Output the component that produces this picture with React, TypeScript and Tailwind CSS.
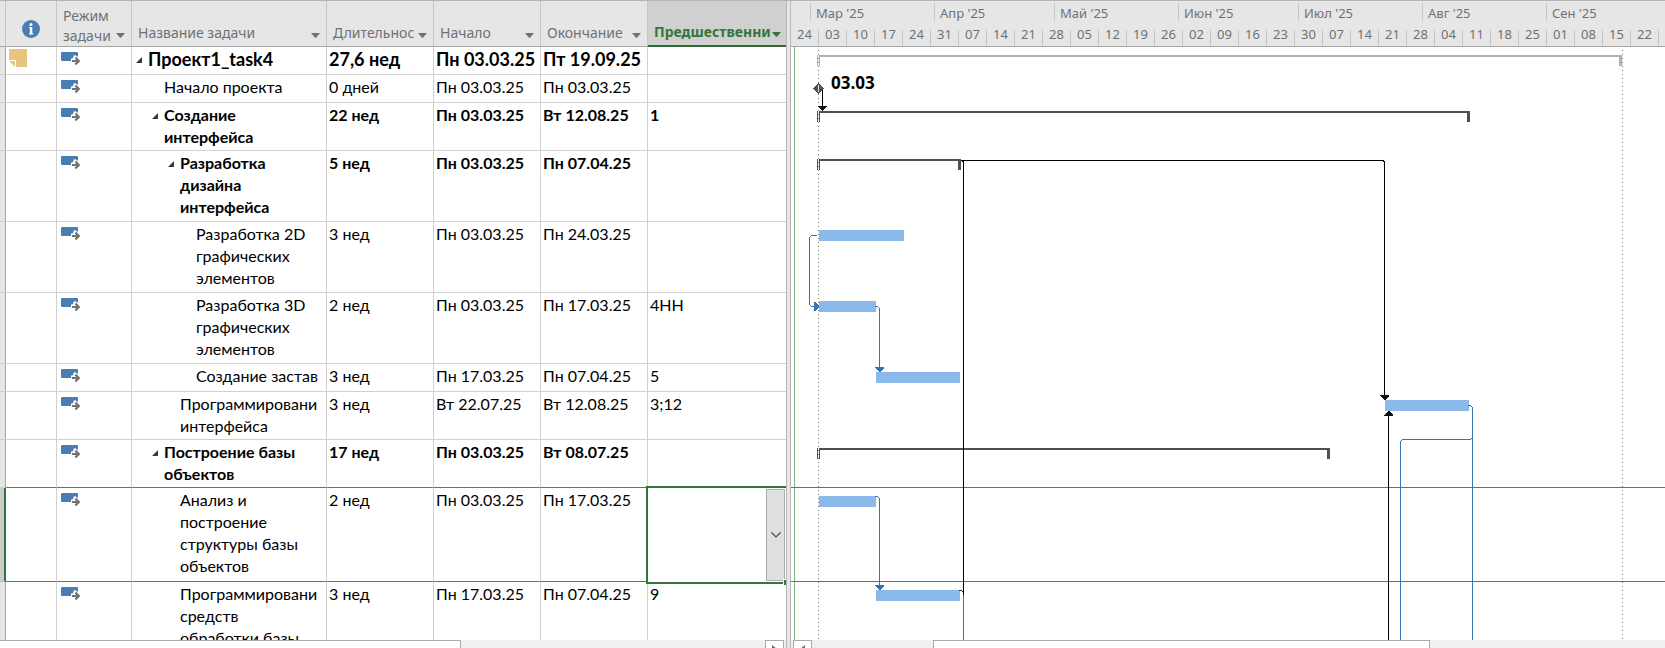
import React from "react";

type Task = {
  name: string;
  level: number;
  summary?: boolean;
  root?: boolean;
  note?: boolean;
  selected?: boolean;
  beforeSelected?: boolean;
  height: number;
  duration: string;
  start: string;
  finish: string;
  pred: string;
};

const tasks: Task[] = [
  { name: "Проект1_task4", level: 0, summary: true, root: true, note: true, height: 28, duration: "27,6 нед", start: "Пн 03.03.25", finish: "Пт 19.09.25", pred: "" },
  { name: "Начало проекта", level: 1, height: 28, duration: "0 дней", start: "Пн 03.03.25", finish: "Пн 03.03.25", pred: "" },
  { name: "Создание\nинтерфейса", level: 1, summary: true, height: 48, duration: "22 нед", start: "Пн 03.03.25", finish: "Вт 12.08.25", pred: "1" },
  { name: "Разработка\nдизайна\nинтерфейса", level: 2, summary: true, height: 71, duration: "5 нед", start: "Пн 03.03.25", finish: "Пн 07.04.25", pred: "" },
  { name: "Разработка 2D\nграфических\nэлементов", level: 3, height: 71, duration: "3 нед", start: "Пн 03.03.25", finish: "Пн 24.03.25", pred: "" },
  { name: "Разработка 3D\nграфических\nэлементов", level: 3, height: 71, duration: "2 нед", start: "Пн 03.03.25", finish: "Пн 17.03.25", pred: "4НН" },
  { name: "Создание застав", level: 3, height: 28, duration: "3 нед", start: "Пн 17.03.25", finish: "Пн 07.04.25", pred: "5" },
  { name: "Программировани\nинтерфейса", level: 2, height: 48, duration: "3 нед", start: "Вт 22.07.25", finish: "Вт 12.08.25", pred: "3;12" },
  { name: "Построение базы\nобъектов", level: 1, summary: true, beforeSelected: true, height: 48, duration: "17 нед", start: "Пн 03.03.25", finish: "Вт 08.07.25", pred: "" },
  { name: "Анализ и\nпостроение\nструктуры базы\nобъектов", level: 2, selected: true, height: 94, duration: "2 нед", start: "Пн 03.03.25", finish: "Пн 17.03.25", pred: "" },
  { name: "Программировани\nсредств\nобработки базы", level: 2, height: 71, duration: "3 нед", start: "Пн 17.03.25", finish: "Пн 07.04.25", pred: "9" },
];

const indents = ["pl-[4px]", "pl-[20px]", "pl-[36px]", "pl-[52px]"];

const months = [
  { label: "", width: "w-5" },
  { label: "Мар '25", width: "w-[124px]" },
  { label: "Апр '25", width: "w-[120px]" },
  { label: "Май '25", width: "w-[124px]" },
  { label: "Июн '25", width: "w-[120px]" },
  { label: "Июл '25", width: "w-[124px]" },
  { label: "Авг '25", width: "w-[124px]" },
];

const weeks = "24 03 10 17 24 31 07 14 21 28 05 12 19 26 02 09 16 23 30 07 14 21 28 04 11 18 25 01 08 15 22".split(" ");

function FilterArrow({ label }: { label: string }) {
  return (
    <button type="button" aria-label={label} className="mb-[8px] block shrink-0">
      <svg width="9" height="5" viewBox="0 0 9 5" className="block fill-current">
        <path d="M0 0H9L5.2 4.4Q4.5 5 3.8 4.4Z" />
      </svg>
    </button>
  );
}

function HeaderCell({ label, active, tall }: { label: string; active?: boolean; tall?: boolean }) {
  return (
    <th
      scope="col"
      className={
        active
          ? "h-[46px] border-b-2 border-[#2f6b33] bg-[#d0d0d0] p-0 align-bottom font-bold text-[#35743a]"
          : "h-[46px] border-r border-b border-r-[#c6c6c6] border-b-[#a6a6a6] p-0 align-bottom font-normal text-[#6f7275]"
      }
    >
      <div className={active ? "flex items-end gap-1 pr-[5px] pl-[6px]" : "flex items-end gap-1 pr-[6px] pl-[6px]"}>
        <span className={tall ? "min-w-0 flex-1" : "mb-[3px] min-w-0 flex-1 whitespace-nowrap"}>{label}</span>
        <FilterArrow label={"Фильтр: " + label} />
      </div>
    </th>
  );
}

function ModeIcon() {
  return (
    <svg width="20" height="14" viewBox="0 0 20 14" className="mt-[4px] ml-[4px] block" role="img" aria-label="Автоматическое планирование">
      <path d="M1 0H16Q17 0 17 1V6H11.5V9H1Q0 9 0 8V1Q0 0 1 0Z" fill="#4a7eb3" />
      <path d="M12.5 4L14 3L16 4.5H17.5V7L19 9L14 12L12 11V10H10V6.5H12Z" fill="#fff" />
      <path d="M11 9H17M14.4 5.6L17.8 9L14.4 12.4" fill="none" stroke="#73726e" strokeWidth="2.2" />
    </svg>
  );
}

function NoteIcon() {
  return (
    <svg width="18" height="18" viewBox="0 0 18 18" className="mt-px ml-[3px] block" role="img" aria-label="Заметка">
      <path d="M0 0H18V18H7V11H0Z" fill="#e8c57e" />
      <path d="M0 12H6V18Z" fill="#e8c57e" />
    </svg>
  );
}

function TaskRow({ task }: { task: Task }) {
  const line = task.selected || task.beforeSelected ? "border-b-[#6e6e6e]" : "border-b-[#d0d0d0]";
  const cell = "border-r border-b border-r-[#d0d0d0] p-0 pt-px align-top " + line;
  const weight = task.summary ? "font-bold" : "font-normal";
  const size = task.root ? "text-[18px]" : "text-[16px]";
  const value = cell + " pl-[2px] whitespace-nowrap " + weight + " " + size;
  return (
    <tr style={{ height: task.height }}>
      <th
        scope="row"
        aria-label={task.name}
        className={
          task.selected
            ? "border-r-2 border-b border-r-[#35743a] border-b-[#c0c0c0] bg-[#cccccc] p-0"
            : "border-r border-b border-r-[#a6a6a6] border-b-[#d0d0d0] bg-[#e6e6e6] p-0"
        }
      />
      <td className={cell}>{task.note && <NoteIcon />}</td>
      <td className={cell}>
        <ModeIcon />
      </td>
      <td className={cell + " " + weight + " " + size}>
        <div className={"flex " + indents[task.level]}>
          <span className="w-[12px] shrink-0">
            {task.summary && (
              <button type="button" aria-label={"Свернуть: " + task.name} className="mt-[9px] block">
                <svg width="6" height="6" viewBox="0 0 6 6" className="block">
                  <path d="M6 0V6H0Z" fill="#3a3a3a" />
                </svg>
              </button>
            )}
          </span>
          <span className="whitespace-pre">{task.name}</span>
        </div>
      </td>
      <td className={value}>{task.duration}</td>
      <td className={value}>{task.start}</td>
      <td className={value}>{task.finish}</td>
      {task.selected ? (
        <td className="relative p-0">
          <div className="absolute -top-[2px] right-0 -bottom-[2px] -left-[2px] flex justify-end border-2 border-r-0 border-[#35743a] bg-white py-px pr-px">
            <button type="button" aria-label="Выбрать предшественника" className="flex w-[19px] items-center justify-center border border-[#acacac] bg-[#e0e0e0]">
              <svg width="10" height="6" viewBox="0 0 10 6" fill="none" stroke="#444" strokeWidth="1.2">
                <path d="M0.5 0.5L5 5L9.5 0.5" />
              </svg>
            </button>
            <span className="absolute right-0 -bottom-[3px] h-[6px] w-[3px] border-t border-l border-white bg-[#35743a]" />
          </div>
        </td>
      ) : (
        <td className={"border-b p-0 pt-px pl-[2px] align-top whitespace-nowrap " + line + " " + weight + " " + size}>{task.pred}</td>
      )}
    </tr>
  );
}

const DAY = 4;
const dayX = (day: number) => day * DAY - 1;
const rowTop = (row: number) => tasks.slice(0, row).reduce((sum, t) => sum + t.height, 0);

/* Days are counted from 24.02.25, the first week on the scale. */
const bars = [
  { row: 4, from: 7, width: 85 },
  { row: 5, from: 7, width: 57 },
  { row: 6, from: 21.25, width: 84 },
  { row: 7, from: 148.5, width: 84 },
  { row: 9, from: 7, width: 57 },
  { row: 10, from: 21.25, width: 84 },
];

const summaries = [
  { row: 0, end: 831, color: "#b1b1b1" },
  { row: 2, end: 679, color: "#505050" },
  { row: 3, end: 170, color: "#505050" },
  { row: 8, end: 539, color: "#505050" },
];

function GanttChart() {
  const origin = dayX(7);
  return (
    <svg className="block h-full w-full" shapeRendering="crispEdges" role="img" aria-label="Диаграмма Ганта">
      <line x1="3.5" y1="0" x2="3.5" y2="100%" stroke="#86b386" />
      <line x1="0" y1={rowTop(9) - 0.5} x2="100%" y2={rowTop(9) - 0.5} stroke="#6e6e6e" />
      <line x1="0" y1={rowTop(10) - 0.5} x2="100%" y2={rowTop(10) - 0.5} stroke="#6e6e6e" />

      {summaries.map((s) => {
        const y = rowTop(s.row) + 8;
        return (
          <g key={s.row} fill={s.color}>
            <rect x={origin + 1} y={y} width={s.end - origin - 1} height="2" />
            <rect x={origin - 1} y={y} width="3" height="11" />
            <rect x={s.end - 3} y={y} width="3" height="11" />
            <rect x={origin} y={y} width="1" height="11" fill="#fff" />
          </g>
        );
      })}

      <g stroke="#777" strokeDasharray="1 3">
        <line x1={origin + 0.5} y1="3" x2={origin + 0.5} y2="100%" />
        <line x1="831.5" y1="3" x2="831.5" y2="100%" />
      </g>

      {bars.map((b) => (
        <rect key={b.row} x={dayX(b.from) + 1} y={rowTop(b.row) + 8} width={b.width} height="11" fill="#8bbaea" />
      ))}

      <g fill="none" stroke="#000">
        <path d="M29 41.5H31.5V60" />
        <path d="M170 113.5H592L593.5 115V350" />
        <path d="M170 113.5H171L172.5 115V548" />
        <path d="M597.5 366V2000" />
      </g>
      <g fill="none" stroke="#3573b4">
        <path d="M26 188.5H20.5L18.5 190.5V257.5L20.5 259.5H24" />
        <path d="M84 259.5H86.5L88.5 261.5V321" />
        <path d="M84 449.5H86.5L88.5 451.5V538" />
        <path d="M168 543.5H170.5L172.5 545.5" stroke="#222" />
        <path d="M172.5 548V2000" />
        <path d="M677 358.5H679.5L681.5 360.5V2000" />
        <path d="M681 391.5L679 392.5H611.5L609.5 394.5V2000" />
      </g>
      <g fill="#111">
        <path d="M27.5 36L33 41.5L27.5 47L22 41.5Z" fill="#505050" />
        <path d="M27 38H28V45H27Z" fill="#ddd" />
        <path d="M27 59H36V60L32 63.5H31L27 60Z" />
        <path d="M589 348H598V349L594 353H593L589 349Z" />
        <path d="M597 364H598L602 368V369H593V368Z" />
      </g>
      <g fill="#3573b4">
        <path d="M23 255H24L28 259V260L24 264H23Z" />
        <path d="M84 320H93V321L89 325H88L84 321Z" />
        <path d="M84 538H93V539L89 543H88L84 539Z" />
      </g>
      <text x="40" y="42" className="fill-black font-['Open_Sans',sans-serif] text-[17px] font-bold">
        03.03
      </text>
    </svg>
  );
}

function ScrollButton({ dir }: { dir: "left" | "right" }) {
  return (
    <button
      type="button"
      aria-label={dir === "left" ? "Прокрутить влево" : "Прокрутить вправо"}
      className="flex h-[17px] w-[19px] shrink-0 items-center justify-center border border-[#ababab] bg-white"
    >
      <svg width="5" height="8" viewBox="0 0 5 8" fill="#6b6b6b">
        <path d={dir === "left" ? "M5 0V8L0 4Z" : "M0 0V8L5 4Z"} />
      </svg>
    </button>
  );
}

export default function App() {
  return (
    <div className="flex h-screen overflow-hidden border-t border-[#b4b4b4] bg-white font-['Lato','Noto_Sans',sans-serif] text-black">
      <section className="flex w-[786px] shrink-0 flex-col">
        <div className="min-h-0 flex-1 overflow-hidden">
          <table className="w-full table-fixed border-separate border-spacing-0 text-left leading-[22px]">
            <colgroup>
              <col className="w-[6px]" />
              <col className="w-[51px]" />
              <col className="w-[75px]" />
              <col className="w-[195px]" />
              <col className="w-[107px]" />
              <col className="w-[107px]" />
              <col className="w-[107px]" />
              <col />
            </colgroup>
            <thead className="bg-[#e6e6e6] font-['Noto_Sans',sans-serif] text-[14px] leading-[20px]">
              <tr>
                <th className="border-r border-b border-r-[#c6c6c6] border-b-[#a6a6a6] p-0" aria-label="Строка" />
                <th scope="col" className="border-r border-b border-r-[#c6c6c6] border-b-[#a6a6a6] p-0 align-bottom">
                  <svg width="18" height="18" viewBox="0 0 18 18" className="mx-auto mb-[8px] block" role="img" aria-label="Индикаторы">
                    <circle cx="9" cy="9" r="9" fill="#4a7eb3" />
                    <circle cx="9" cy="4.4" r="1.5" fill="#fff" />
                    <path d="M7 7H10.3V13.2H11.2V14.5H7V13.2H7.9V8.3H7Z" fill="#fff" />
                  </svg>
                </th>
                <HeaderCell label="Режим задачи" tall />
                <HeaderCell label="Название задачи" />
                <HeaderCell label="Длительнос" />
                <HeaderCell label="Начало" />
                <HeaderCell label="Окончание" />
                <HeaderCell label="Предшественни" active />
              </tr>
            </thead>
            <tbody>
              {tasks.map((t, i) => (
                <TaskRow key={i} task={t} />
              ))}
            </tbody>
          </table>
        </div>
        <div className="flex h-[8px] shrink-0 justify-between overflow-hidden bg-[#f0f0f0] pr-[2px]">
          <div className="h-[17px] w-[461px] border-t border-r border-[#ababab] bg-white" />
          <ScrollButton dir="right" />
        </div>
      </section>

      <div className="w-[5px] shrink-0 border-x border-[#b8b8b8] bg-[#e6e6e6]" />

      <section className="flex min-w-0 flex-1 flex-col">
        <header className="h-[46px] shrink-0 overflow-hidden border-b border-[#a6a6a6] bg-[#e6e6e6] font-['Noto_Sans',sans-serif] text-[13px] text-[#6f7275]">
          <div className="flex h-[26px] items-start pt-[2px]">
            {months.map((m) => (
              <div key={m.label} className={"h-[18px] shrink-0 border-r border-[#c6c6c6] pl-[5px] leading-[20px] whitespace-nowrap " + m.width}>
                {m.label}
              </div>
            ))}
            <div className="pl-[5px] leading-[20px] whitespace-nowrap">Сен '25</div>
          </div>
          <div className="flex h-[20px] items-stretch">
            {weeks.map((w, i) => (
              <div key={i} className="flex w-7 shrink-0 justify-center">
                <span className="flex-1 text-center leading-[14px]">{w}</span>
                <span className="mt-[3px] w-px bg-[#c6c6c6]" />
              </div>
            ))}
          </div>
        </header>
        <div className="min-h-0 flex-1 overflow-hidden">
          <GanttChart />
        </div>
        <div className="flex h-[8px] shrink-0 overflow-hidden bg-[#f0f0f0] pl-[2px]">
          <ScrollButton dir="left" />
          <div className="ml-[121px] h-[17px] w-[497px] border border-[#ababab] bg-white" />
        </div>
      </section>
    </div>
  );
}
